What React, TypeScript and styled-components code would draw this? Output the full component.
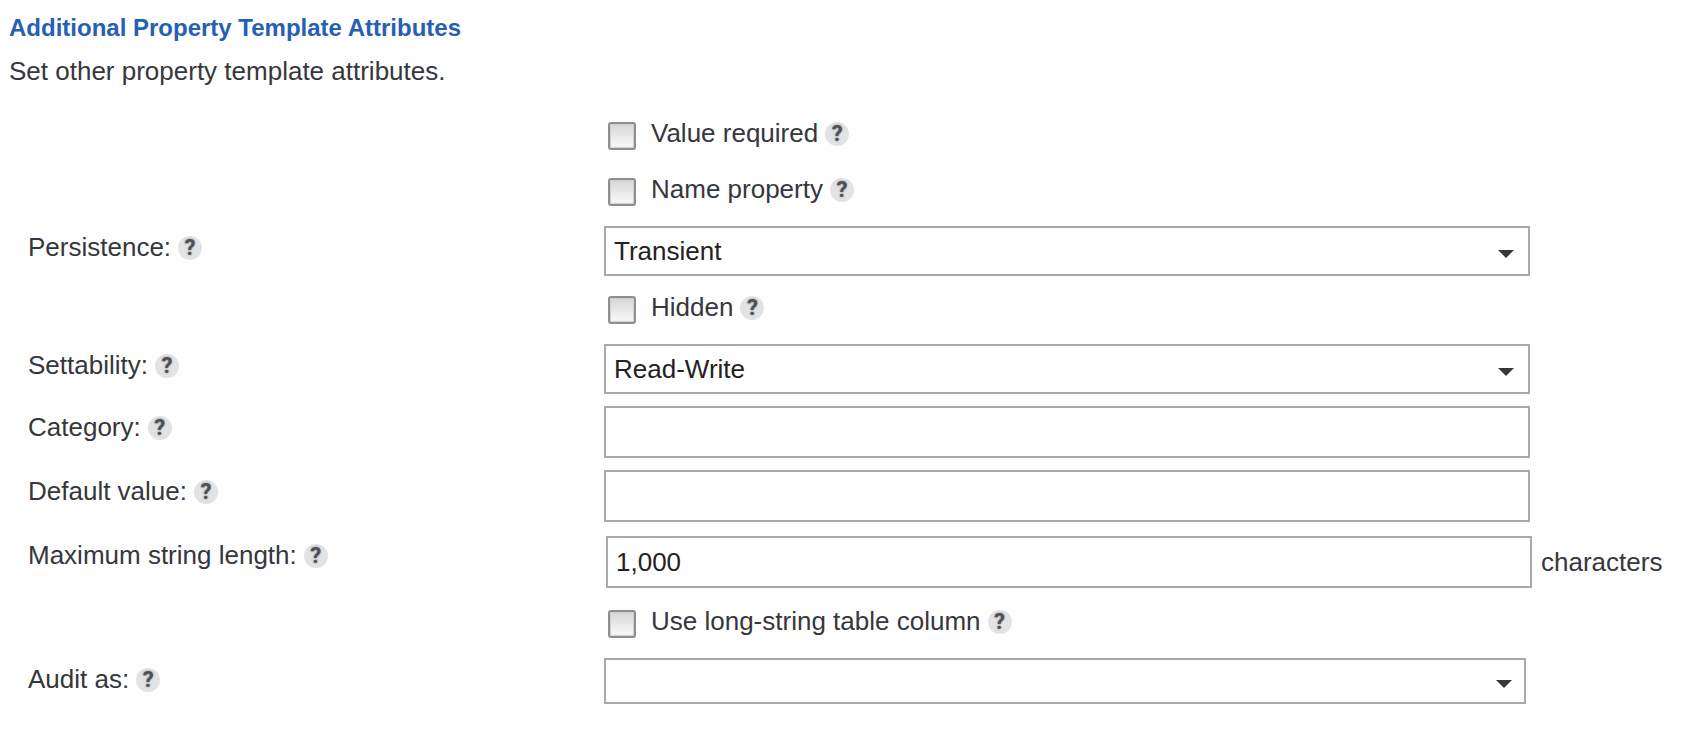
import React, { useId, useState } from "react";
import styled, { createGlobalStyle } from "styled-components";

const GlobalStyle = createGlobalStyle`
  *, *::before, *::after { box-sizing: border-box; }
  body {
    margin: 0;
    background: #fefefe;
    color: #36373c;
    font-family: "Liberation Sans", Arial, Helvetica, sans-serif;
    font-size: 26px;
    line-height: 22px;
  }
`;

const Page = styled.main`
  padding: 16px 0 22px;
`;

const Header = styled.header`
  padding: 0 9px;
  margin-bottom: 26px;
`;

const Title = styled.h1`
  margin: 0 0 20px;
  font-size: 24px;
  line-height: 24px;
  font-weight: 700;
  color: #2660b2;
`;

const Intro = styled.p`
  margin: 0;
`;

const Form = styled.form`
  padding-left: 28px;
`;

const Row = styled.div`
  display: grid;
  grid-template-columns: 576px minmax(200px, 1fr) 164px;
  padding: 6px 0;
`;

const Caption = styled.div`
  display: flex;
  align-items: flex-start;
  gap: 7px;
  padding-top: 10px;
`;

const TickRow = styled.div`
  display: flex;
  align-items: flex-start;
  grid-column: 2 / -1;
  padding: 8px 4px;
`;

const TickLabel = styled.label`
  margin: 0 7px 0 15px;
`;

const Tick = styled.input`
  appearance: none;
  flex: none;
  width: 28px;
  height: 28px;
  margin: 0;
  border: 2px solid #8e8e8e;
  border-radius: 3px;
  background: linear-gradient(#d6d6d6, #fafafa);
  box-shadow: inset 0 0 1px 1px #d0d0d0;

  &:checked {
    background: radial-gradient(circle, #36373c 6px, #ececec 7px);
  }
`;

const Help = styled.button`
  flex: none;
  width: 24px;
  height: 24px;
  padding: 0;
  border: 0;
  border-radius: 50%;
  background: #e2e3e5;
  color: #505055;
  font: 700 22px/24px Roboto, "Liberation Sans", sans-serif;
  text-shadow: 0 0 2px #77777c;
  cursor: help;
`;

const fieldStyle = `
  display: block;
  width: 100%;
  padding: 0 8px;
  border: 2px solid #a9a9a9;
  border-radius: 0;
  background: #fff;
  color: #222;
  font: 26px "Liberation Sans", Arial, sans-serif;
`;

const TextBox = styled.input`
  ${fieldStyle}
  height: 52px;
`;

const FieldCell = styled.div<{ $wide?: boolean }>`
  padding: ${(p) => (p.$wide ? "2px" : "0 4px 0 0")};
`;

const SelectCell = styled.div<{ $compact?: boolean }>`
  position: relative;
  margin-right: ${(p) => (p.$compact ? "8px" : "4px")};

  &::after {
    content: "";
    position: absolute;
    top: calc(50% - 1px);
    right: ${(p) => (p.$compact ? "14px" : "16px")};
    border: 8px solid transparent;
    border-top-color: #36373c;
    border-bottom: 0;
    pointer-events: none;
  }
`;

const Select = styled.select<{ $compact?: boolean }>`
  ${fieldStyle}
  appearance: none;
  height: ${(p) => (p.$compact ? "46px" : "50px")};
`;

const Suffix = styled.span`
  align-self: center;
  padding-left: 7px;
`;

function HelpButton({ topic }: { topic: string }) {
  return (
    <Help type="button" aria-label={`Help: ${topic}`}>
      ?
    </Help>
  );
}

function TickField({ label }: { label: string }) {
  const id = useId();
  return (
    <Row>
      <TickRow>
        <Tick type="checkbox" id={id} />
        <TickLabel htmlFor={id}>{label}</TickLabel>
        <HelpButton topic={label} />
      </TickRow>
    </Row>
  );
}

function FieldCaption({ id, label }: { id: string; label: string }) {
  return (
    <Caption>
      <label htmlFor={id}>{label}:</label>
      <HelpButton topic={label} />
    </Caption>
  );
}

function SelectField({ label, options, compact }: { label: string; options: string[]; compact?: boolean }) {
  const id = useId();
  const [value, setValue] = useState(options[0]);
  return (
    <Row>
      <FieldCaption id={id} label={label} />
      <SelectCell $compact={compact}>
        <Select id={id} $compact={compact} value={value} onChange={(e) => setValue(e.target.value)}>
          {options.map((o) => (
            <option key={o} value={o}>
              {o}
            </option>
          ))}
        </Select>
      </SelectCell>
    </Row>
  );
}

function TextField({ label, initial = "", suffix }: { label: string; initial?: string; suffix?: string }) {
  const id = useId();
  return (
    <Row>
      <FieldCaption id={id} label={label} />
      <FieldCell $wide={Boolean(suffix)}>
        <TextBox id={id} type="text" defaultValue={initial} />
      </FieldCell>
      {suffix && <Suffix>{suffix}</Suffix>}
    </Row>
  );
}

export default function App() {
  return (
    <>
      <GlobalStyle />
      <Page>
        <Header>
          <Title>Additional Property Template Attributes</Title>
          <Intro>Set other property template attributes.</Intro>
        </Header>
        <Form>
          <TickField label="Value required" />
          <TickField label="Name property" />
          <SelectField label="Persistence" options={["Transient"]} />
          <TickField label="Hidden" />
          <SelectField label="Settability" options={["Read-Write"]} />
          <TextField label="Category" />
          <TextField label="Default value" />
          <TextField label="Maximum string length" initial="1,000" suffix="characters" />
          <TickField label="Use long-string table column" />
          <SelectField label="Audit as" options={[""]} compact />
        </Form>
      </Page>
    </>
  );
}
